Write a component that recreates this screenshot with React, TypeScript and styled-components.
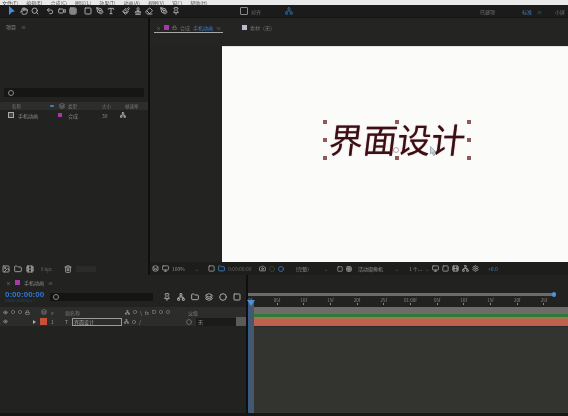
import React from "react";
import styled, { createGlobalStyle } from "styled-components";
import {
  Hand, Search, Undo2, Video, Grid3x3, Square, PenTool, Type, Paintbrush, Stamp, Eraser, Pin,
  Folder, Film, Trash2, Camera, Monitor, Lock, Eye, Settings, Network, Circle, Layers, Image as ImageIcon,
} from "lucide-react";

const Global = createGlobalStyle`
  html, body { margin: 0; padding: 0; background: #1d1d1d; }
  body { width: 568px; height: 416px; overflow: hidden; font-family: "Noto Sans CJK SC", "Liberation Sans", sans-serif; }
`;

const Screen = styled.div`
  width: 568px; height: 416px; display: grid;
  grid-template-rows: 5px 13px 244px 13px 138px 3px;
  background: #1e1e1d; overflow: hidden; filter: blur(0.35px);
  svg.lucide { stroke-width: 3; }
`;
const MenuBar = styled.div`
  background: #e9e9e9; display: flex; gap: 8px; padding-left: 2px; overflow: hidden;
  align-items: flex-end; font-size: 5px; line-height: 5px; color: #555;
`;
const Toolbar = styled.div`
  background: #1b1b1b; display: flex; align-items: center; padding: 0 3px 0 8px; gap: 3.5px;
  color: #a9a9a9; border-bottom: 1px solid #141414;
`;
const ToolSpacer = styled.div<{ $w: number }>`width: ${p => p.$w}px; flex: none;`;
const ToolRight = styled.div`margin-left: auto; display: flex; align-items: center; gap: 5px;`;
const SelectArrow = styled.svg`width: 8px; height: 10px; flex: none;`;
const ToolLabel = styled.span<{ $blue?: boolean }>`
  font-size: 5px; white-space: nowrap; color: ${p => (p.$blue ? "#3f7fc6" : "#777")};
`;
const CheckBox = styled.span`width: 6px; height: 6px; border: 1px solid #8a8a8a; border-radius: 1px;`;

const TopArea = styled.div`display: grid; grid-template-columns: 148px 2px 1fr; min-height: 0;`;
const Divider = styled.div`background: #0f0f0f;`;
const ProjectPanel = styled.div`background: #222221; display: flex; flex-direction: column; min-height: 0;`;
const PanelTitle = styled.div`
  height: 16px; padding-left: 6px; box-sizing: border-box; font-size: 5px; color: #8b8b8b;
  display: flex; gap: 5px; align-items: center;
`;
const Preview = styled.div`height: 54px;`;
const SearchBox = styled.div`
  margin: 0 4px; height: 9px; background: #161615; color: #888; display: flex; align-items: center; padding-left: 4px;
`;
const SearchMark = styled.div`width: 4px; height: 4px; border: 1px solid #888; border-radius: 50%;`;
const ProjectHeader = styled.div`
  margin-top: 5px; height: 8px; background: #2d2d2c; display: grid; align-items: center;
  grid-template-columns: 38px 9px 9px 34px 23px 24px; padding-left: 12px;
  font-size: 4.5px; color: #777; white-space: nowrap;
`;
const ProjectRow = styled.div`
  height: 10px; display: grid; align-items: center;
  grid-template-columns: 10px 40px 10px 34px 18px 18px; padding-left: 8px; margin-left: 0;
  font-size: 5px; color: #8a8a8a; white-space: nowrap;
`;
const Swatch = styled.span<{ $c: string; $s?: number }>`
  display: block; width: ${p => p.$s ?? 4}px; height: ${p => p.$s ?? 4}px; background: ${p => p.$c}; flex: none;
`;
const BlueDot = styled.span`width: 4px; height: 2px; border-radius: 1px; background: #3f7fc6;`;
const FileIcon = styled.span`width: 6px; height: 6px; border: 1px solid #aaa; background: #444; box-sizing: border-box;`;

const CompPanel = styled.div`display: flex; flex-direction: column; min-height: 0; background: #242423;`;
const TabBar = styled.div`height: 16px; padding: 4px 0 0 4px; box-sizing: border-box; display: flex; align-items: flex-start; gap: 17px;`;
const Tab = styled.div<{ $active?: boolean }>`
  height: 11px; display: flex; align-items: center; gap: 3px; padding: 0 2px;
  font-size: 5px; white-space: nowrap; color: #777;
  border-bottom: ${p => (p.$active ? "1px solid #a8a8a8" : "none")};
  box-sizing: border-box;
`;
const TabBlue = styled.span`color: #3f7fc6;`;
const SubTabs = styled.div`height: 12px; padding: 1px 0 0 10px; box-sizing: border-box;`;
const SubTab = styled.span`
  display: inline-block; background: #12304e; color: #4a90e0; font-size: 5.5px; line-height: 8px; padding: 0 6px 0 3px;
`;
const ViewerRow = styled.div`flex: 1; display: flex; min-height: 0;`;
const Pasteboard = styled.div`width: 72px; background: #232322;`;
const Canvas = styled.div`
  flex: 1; background: #fbfbfa; display: flex; align-items: flex-start;
  border-top: 1px solid #e6e6e6; padding: 75px 0 0 103px;
`;
const TextLayer = styled.div`position: relative; width: 145px; height: 37px;`;
const Title = styled.div`
  font-family: "Noto Sans CJK SC", sans-serif; font-size: 34px; line-height: 34px; font-weight: 400;
  color: #3a1014; white-space: nowrap; text-align: center; transform: skewX(-7deg);
  text-shadow: 0 0 1px #a56a6a;
`;
const Handle = styled.span<{ $x: number; $y: number }>`
  position: absolute; width: 4px; height: 4px; background: #8f5a5a;
  left: ${p => p.$x}px; top: ${p => p.$y}px;
`;
const AnchorMark = styled.span`
  position: absolute; left: 68px; top: 25px; width: 4px; height: 4px; border: 1px solid #b9a6a6; border-radius: 50%;
`;
const Cursor = styled.svg`position: absolute; left: 105px; top: 24px; width: 7px; height: 10px;`;

const FooterRow = styled.div`display: grid; grid-template-columns: 148px 2px 1fr; min-height: 0;`;
const ProjectFooter = styled.div`
  background: #222221; display: flex; align-items: center; padding-left: 2px; gap: 4px; color: #999;
`;
const FooterText = styled.span`font-size: 4.5px; color: #666; margin: 0 8px 0 3px; white-space: nowrap;`;
const FooterField = styled.span`width: 20px; height: 6px; background: #2b2b2a;`;
const ViewerBar = styled.div`
  background: #1d1d1c; display: flex; align-items: center; padding-left: 2px; gap: 3px; color: #999;
  font-size: 5px; white-space: nowrap;
`;
const ViewerText = styled.span<{ $blue?: boolean; $dim?: boolean }>`
  color: ${p => (p.$blue ? "#3f7fc6" : p.$dim ? "#666" : "#8e8e8e")};
`;
const ViewerIconBlue = styled.span`color: #3f7fc6; display: flex;`;
const BarGap = styled.span<{ $w: number }>`width: ${p => p.$w}px; flex: none;`;

const Timeline = styled.div`display: grid; grid-template-columns: 246px 2px 1fr; background: #232322; min-height: 0;`;
const TimelineLeft = styled.div`display: flex; flex-direction: column; background: #222221; min-height: 0;`;
const CompTab = styled.div`
  height: 15px; padding: 0 0 0 6px; box-sizing: border-box; display: flex; align-items: center; gap: 4px;
  font-size: 5px; color: #8b8b8b;
`;
const TimeRow = styled.div`height: 17px; display: flex; align-items: flex-start; padding-left: 5px; gap: 6px; color: #aaa;`;
const TimeBlock = styled.div`width: 39px; display: flex; flex-direction: column; flex: none;`;
const Timecode = styled.span`font-family: "Liberation Sans", sans-serif; font-size: 8px; line-height: 9px; font-weight: 700; color: #2f78cd; white-space: nowrap;`;
const TimeSub = styled.span`font-size: 3.5px; line-height: 4px; color: #25496f; white-space: nowrap;`;
const TimeSearch = styled.div`
  width: 103px; height: 8px; margin-top: 3px; background: #141413; display: flex; align-items: center; padding-left: 3px; box-sizing: border-box;
`;
const TimeTools = styled.div`display: flex; gap: 6px; align-items: center; margin: 3px 0 0 4px;`;
const LayerHeader = styled.div`
  height: 10px; background: #2c2c2b; display: grid; align-items: center;
  grid-template-columns: 38px 10px 14px 60px 63px 1fr; padding-left: 3px; font-size: 5px; color: #7a7a7a; white-space: nowrap;
`;
const HeaderIcons = styled.div`display: flex; gap: 3px; color: #999; align-items: center;`;
const LayerRow = styled.div`
  height: 9px; background: #2c2c2b; display: grid; align-items: center;
  grid-template-columns: 30px 7px 11px 14px 7px 52px 62px 10px 40px 10px; padding-left: 3px; font-size: 5px; color: #999;
`;
const TriangleMark = styled.span`
  width: 0; height: 0; border-left: 3px solid #aaa; border-top: 2px solid transparent; border-bottom: 2px solid transparent;
`;
const NameField = styled.span`
  border: 1px solid #9a9a9a; height: 8px; line-height: 6px; box-sizing: border-box; padding-left: 1px; width: 50px; color: #a5a5a5; font-size: 5px;
`;
const ParentPick = styled.span`
  background: #1b1b1a; height: 8px; color: #888; padding-left: 2px; line-height: 7px; font-size: 5px;
`;
const RowEnd = styled.span`background: #5a5a58; height: 9px;`;
const EmptyLayers = styled.div`flex: 1;`;

const TimelineRight = styled.div`display: flex; flex-direction: column; min-height: 0; position: relative;`;
const NavBar = styled.div`height: 32px; background: #222221; padding-top: 18px; box-sizing: border-box;`;
const NavTrack = styled.div`height: 3px; margin-right: 14px; background: #6b6b6a; position: relative;`;
const NavKnob = styled.span`position: absolute; right: -2px; top: -1px; width: 4px; height: 5px; border-radius: 2px; background: #4f90d8;`;
const Ruler = styled.div`
  display: flex; margin: 2px 0 0 -11px; font-size: 4.5px; color: #8a8a8a;
`;
const RulerTick = styled.span<{ $w: number }>`
  flex: none; width: ${p => p.$w}px; display: flex; flex-direction: column; align-items: center; line-height: 5px; white-space: nowrap;
`;
const TickLine = styled.span`width: 1px; height: 2px; background: #888;`;
const WorkBar = styled.div`height: 7px; background: #6c6d67;`;
const GreenBar = styled.div`height: 3px; background: #2f7a38;`;
const OrangeLine = styled.div`height: 2px; background: #a3754f;`;
const RedBar = styled.div`height: 7px; background: #c2604f;`;
const GraphArea = styled.div`flex: 1; background: #33342f; border-top: 1px solid #2a2a28;`;
const Playhead = styled.div`
  position: absolute; left: 0; top: 25px; bottom: 0; width: 6px; background: #46586c; border-left: 1px solid #355a88; box-sizing: border-box;
`;
const PlayheadCap = styled.span`
  position: absolute; left: -2px; top: 0; width: 0; height: 0; border-left: 4px solid transparent; border-right: 4px solid transparent; border-top: 6px solid #4f90d8;
`;
const Bottom = styled.div`background: #161615;`;

const I = 8;
const menus = ["文件(F)", "编辑(E)", "合成(C)", "图层(L)", "效果(T)", "动画(A)", "视图(V)", "窗口", "帮助(H)"];
const ticks = ["0f", "05f", "10f", "15f", "20f", "25f", "01:00f", "05f", "10f", "15f", "20f", "25f"];
const handles: [number, number][] = [[0, 0], [72, 0], [144, 0], [0, 18], [144, 18], [0, 36], [72, 36], [144, 36]];

export default function App() {
  return (
    <>
      <Global />
      <Screen>
        <MenuBar>{menus.map(m => <span key={m}>{m}</span>)}</MenuBar>
        <Toolbar>
          <SelectArrow viewBox="0 0 8 10"><path d="M1 0 L7 5.5 L4 6 L1 9 Z" fill="#3f8fe0" /></SelectArrow>
          <Hand size={I} /><Search size={I} />
          <ToolSpacer $w={0} />
          <Undo2 size={I} /><Video size={I} /><Grid3x3 size={I} />
          <ToolSpacer $w={0} />
          <Square size={I} /><PenTool size={I} /><Type size={I} />
          <ToolSpacer $w={0} />
          <Paintbrush size={I} /><Stamp size={I} /><Eraser size={I} />
          <ToolSpacer $w={0} />
          <PenTool size={I} /><Pin size={I} />
          <ToolSpacer $w={53} />
          <CheckBox /><ToolLabel>对齐</ToolLabel>
          <ToolSpacer $w={17} />
          <Network size={I} color="#2c5f94" />
          <ToolRight>
            <ToolLabel>已建项</ToolLabel>
            <ToolSpacer $w={17} />
            <ToolLabel $blue>标准</ToolLabel>
            <ToolLabel $blue>≡</ToolLabel>
            <ToolSpacer $w={3} />
            <ToolLabel>小屏</ToolLabel>
          </ToolRight>
        </Toolbar>
        <TopArea>
          <ProjectPanel>
            <PanelTitle><span>项目</span><span>≡</span></PanelTitle>
            <Preview />
            <SearchBox><SearchMark /></SearchBox>
            <ProjectHeader>
              <span>名称</span><BlueDot /><Layers size={6} /><span>类型</span><span>大小</span><span>帧速率</span>
            </ProjectHeader>
            <ProjectRow>
              <FileIcon /><span>手机动画</span><Swatch $c="#a33aa8" /><span>合成</span><span>30</span><Network size={6} color="#bbb" />
            </ProjectRow>
          </ProjectPanel>
          <Divider />
          <CompPanel>
            <TabBar>
              <Tab $active>
                <span>×</span><Swatch $c="#a33aa8" $s={5} /><Lock size={5} />
                <span>合成</span><TabBlue>手机动画</TabBlue><span>≡</span>
              </Tab>
              <Tab><Swatch $c="#b9b9d6" $s={5} /><span>素材（无）</span></Tab>
            </TabBar>
            <SubTabs><SubTab>手机动画</SubTab></SubTabs>
            <ViewerRow>
              <Pasteboard />
              <Canvas>
                <TextLayer>
                  <Title>界面设计</Title>
                  {handles.map(([x, y]) => <Handle key={`${x}-${y}`} $x={x - 2} $y={y - 2} />)}
                  <AnchorMark />
                  <Cursor viewBox="0 0 7 10"><path d="M0.5 0.5 L6 6 L3.5 6 L5 9 L3.5 9.5 L2 6.5 L0.5 8 Z" fill="#cfd3d8" stroke="#7d8a96" strokeWidth="0.6" /></Cursor>
                </TextLayer>
              </Canvas>
            </ViewerRow>
          </CompPanel>
        </TopArea>
        <FooterRow>
          <ProjectFooter>
            <ImageIcon size={8} /><Folder size={8} /><Film size={8} />
            <FooterText>8 bpc</FooterText><Trash2 size={8} /><FooterField />
          </ProjectFooter>
          <Divider />
          <ViewerBar>
            <Layers size={7} /><Monitor size={7} />
            <ViewerText>100%</ViewerText><BarGap $w={4} /><ViewerText $dim>⌄</ViewerText>
            <BarGap $w={3} /><Square size={7} /><ViewerIconBlue><Folder size={7} /></ViewerIconBlue>
            <ViewerText $dim>0:00:00:00</ViewerText>
            <BarGap $w={1} /><Camera size={7} /><Circle size={6} color="#444" /><Circle size={6} color="#3f7fc6" />
            <BarGap $w={6} /><ViewerText>(完整)</ViewerText><BarGap $w={9} /><ViewerText $dim>⌄</ViewerText>
            <BarGap $w={3} /><Square size={6} /><Grid3x3 size={6} />
            <BarGap $w={0} /><ViewerText>活动摄像机</ViewerText><BarGap $w={6} /><ViewerText $dim>⌄</ViewerText>
            <BarGap $w={4} /><ViewerText>1 个...</ViewerText><ViewerText $dim>⌄</ViewerText>
            <Monitor size={7} /><Square size={7} /><Film size={7} /><Network size={7} /><Settings size={7} />
            <BarGap $w={3} /><ViewerText $blue>+0.0</ViewerText>
          </ViewerBar>
        </FooterRow>
        <Timeline>
          <TimelineLeft>
            <CompTab><span>×</span><Swatch $c="#a33aa8" $s={5} /><span>手机动画</span><span>≡</span></CompTab>
            <TimeRow>
              <TimeBlock><Timecode>0:00:00:00</Timecode><TimeSub>00000 (30.00 fps)</TimeSub></TimeBlock>
              <TimeSearch><SearchMark /></TimeSearch>
              <TimeTools>
                <Pin size={8} /><Network size={8} /><Folder size={8} /><Layers size={8} /><Circle size={8} /><Square size={8} />
              </TimeTools>
            </TimeRow>
            <LayerHeader>
              <HeaderIcons><Eye size={5} /><Circle size={4} /><Circle size={4} /><Lock size={5} /></HeaderIcons>
              <Layers size={6} />
              <span>#</span>
              <span>源名称</span>
              <HeaderIcons><Network size={5} /><Circle size={4} /><span>\</span><span>fx</span><Square size={4} /><Circle size={4} /><Circle size={4} /></HeaderIcons>
              <span>父级</span>
            </LayerHeader>
            <LayerRow>
              <Eye size={5} />
              <TriangleMark />
              <Swatch $c="#c84f38" $s={7} />
              <span>1</span>
              <span>T</span>
              <NameField>界面设计</NameField>
              <HeaderIcons><Network size={5} /><Circle size={4} /><span>/</span></HeaderIcons>
              <Circle size={6} color="#777" />
              <ParentPick>无</ParentPick>
              <RowEnd />
            </LayerRow>
            <EmptyLayers />
          </TimelineLeft>
          <Divider />
          <TimelineRight>
            <NavBar>
              <NavTrack><NavKnob /></NavTrack>
              <Ruler>
                {ticks.map((t, i) => <RulerTick key={i} $w={26.7}>{t}<TickLine /></RulerTick>)}
              </Ruler>
            </NavBar>
            <WorkBar /><GreenBar /><OrangeLine /><RedBar />
            <GraphArea />
            <Playhead><PlayheadCap /></Playhead>
          </TimelineRight>
        </Timeline>
        <Bottom />
      </Screen>
    </>
  );
}
